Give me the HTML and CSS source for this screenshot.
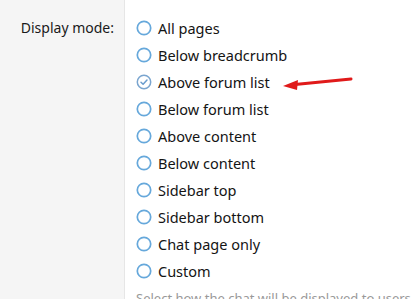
FILE: index.html
```html
<!DOCTYPE html>
<html>
<head>
<meta charset="utf-8">
<link rel="stylesheet" href="styles.css">
</head>
<body>
<div class="form-row">
  <div class="label-col"><span class="label">Display mode:</span></div>
  <div class="input-col">
    <ul class="radio-list">
      <li class="radio"><svg class="radio-icon" viewBox="0 0 16 16"><circle cx="8" cy="8" r="6.7" fill="none" stroke="#66a8db" stroke-width="1.7"/></svg>All pages</li>
      <li class="radio"><svg class="radio-icon" viewBox="0 0 16 16"><circle cx="8" cy="8" r="6.7" fill="none" stroke="#66a8db" stroke-width="1.7"/></svg>Below breadcrumb</li>
      <li class="radio checked"><svg class="radio-icon" viewBox="0 0 16 16"><circle cx="8" cy="8" r="6.7" fill="none" stroke="#7aa5cf" stroke-width="1.5"/><path d="M5 8.2 L7.1 10.2 L11 6" fill="none" stroke="#6a9ccd" stroke-width="1.5" stroke-linecap="round" stroke-linejoin="round"/></svg>Above forum list</li>
      <li class="radio"><svg class="radio-icon" viewBox="0 0 16 16"><circle cx="8" cy="8" r="6.7" fill="none" stroke="#66a8db" stroke-width="1.7"/></svg>Below forum list</li>
      <li class="radio"><svg class="radio-icon" viewBox="0 0 16 16"><circle cx="8" cy="8" r="6.7" fill="none" stroke="#66a8db" stroke-width="1.7"/></svg>Above content</li>
      <li class="radio"><svg class="radio-icon" viewBox="0 0 16 16"><circle cx="8" cy="8" r="6.7" fill="none" stroke="#66a8db" stroke-width="1.7"/></svg>Below content</li>
      <li class="radio"><svg class="radio-icon" viewBox="0 0 16 16"><circle cx="8" cy="8" r="6.7" fill="none" stroke="#66a8db" stroke-width="1.7"/></svg>Sidebar top</li>
      <li class="radio"><svg class="radio-icon" viewBox="0 0 16 16"><circle cx="8" cy="8" r="6.7" fill="none" stroke="#66a8db" stroke-width="1.7"/></svg>Sidebar bottom</li>
      <li class="radio"><svg class="radio-icon" viewBox="0 0 16 16"><circle cx="8" cy="8" r="6.7" fill="none" stroke="#66a8db" stroke-width="1.7"/></svg>Chat page only</li>
      <li class="radio"><svg class="radio-icon" viewBox="0 0 16 16"><circle cx="8" cy="8" r="6.7" fill="none" stroke="#66a8db" stroke-width="1.7"/></svg>Custom</li>
    </ul>
    <p class="hint">Select how the chat will be displayed to users.</p>
  </div>
</div>
<svg class="arrow" width="80" height="20" viewBox="0 0 80 20">
  <line x1="14" y1="9.5" x2="70" y2="4" stroke="#e01a1a" stroke-width="3" stroke-linecap="round"/>
  <polygon points="2,11 17,5 16,15" fill="#e01a1a"/>
</svg>
</body>
</html>
```
FILE: styles.css
```css
html, body {
  margin: 0;
  padding: 0;
  background: #fff;
  font-family: "Noto Sans", "Open Sans", sans-serif;
  color: #141414;
  overflow: hidden;
}
.form-row {
  display: flex;
  min-height: 299px;
}
.label-col {
  width: 125px;
  flex: none;
  background: #f5f5f5;
  border-right: 1px solid #e6e6e6;
  box-sizing: border-box;
  text-align: right;
  padding: 16px 10px 0 0;
}
.label {
  font-size: 14px;
  line-height: 22px;
  color: #1a1a1a;
}
.input-col {
  padding: 14px 0 0 11px;
}
.radio-list {
  list-style: none;
  margin: 0;
  padding: 0;
}
.radio {
  display: flex;
  align-items: center;
  height: 27px;
  font-size: 14.5px;
  white-space: nowrap;
}
.radio-icon {
  width: 16px;
  height: 16px;
  margin-right: 6px;
  flex: none;
  display: block;
}
.hint {
  margin: 5px 0 0;
  font-size: 13px;
  color: #999;
  white-space: nowrap;
}
.arrow {
  position: absolute;
  left: 281px;
  top: 75px;
}
```
